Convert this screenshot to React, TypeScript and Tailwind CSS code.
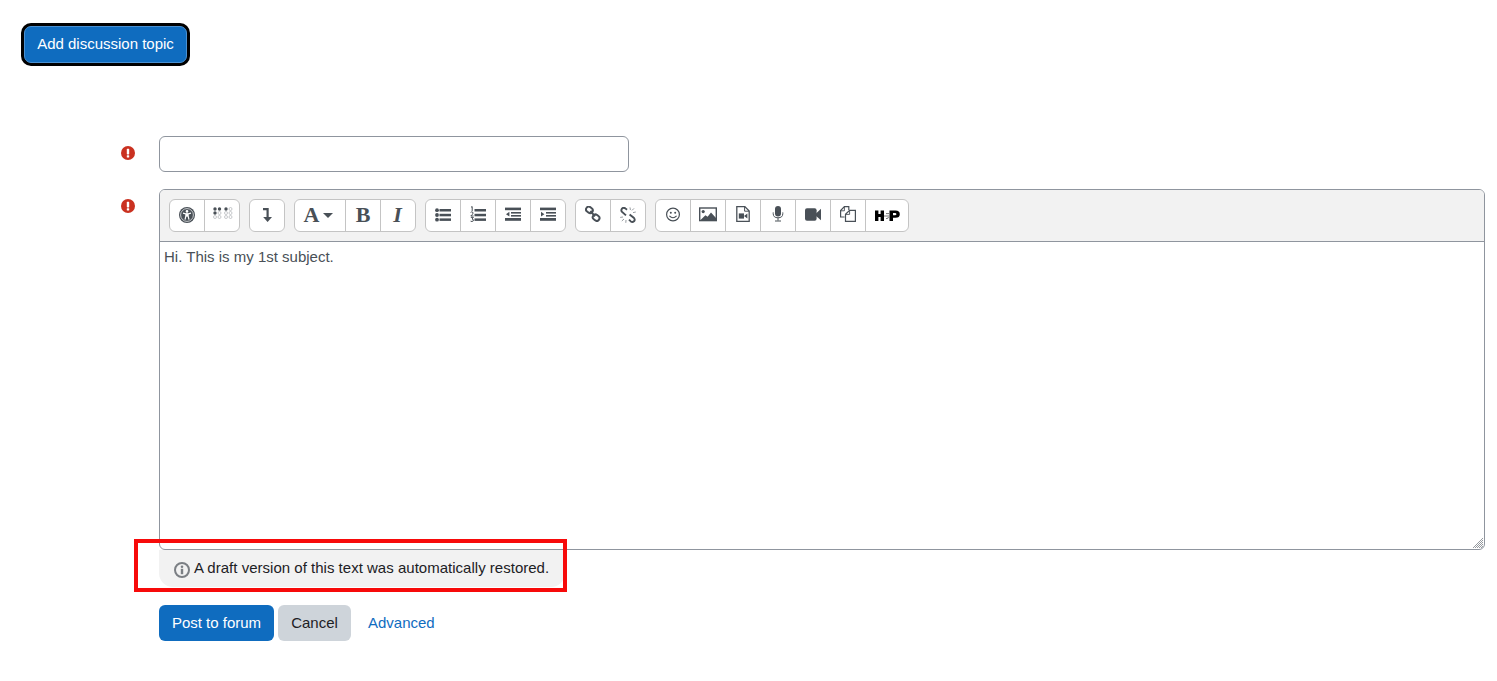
const ink = '#495057';

function ToolIcon({ children, w = 16, h = 16, className }: { children: React.ReactNode; w?: number; h?: number; className?: string }) {
  return (
    <svg width={w} height={h} viewBox={`0 0 ${w} ${h}`} fill="none" aria-hidden="true" className={className}>
      {children}
    </svg>
  );
}

function ToolButton({ children, width, last }: { children: React.ReactNode; width?: string; last?: boolean }) {
  const w = width ?? (last ? 'w-[34px]' : 'w-[35px]');
  return (
    <div className={`${w} h-full flex items-start justify-center pt-[7px] ${last ? '' : 'border-r border-[#c4c4c4]'}`}>
      {children}
    </div>
  );
}

function ToolGroup({ children }: { children: React.ReactNode }) {
  return (
    <div className="flex h-[33px] bg-white border border-[#c4c4c4] rounded-[6px] overflow-hidden box-border">
      {children}
    </div>
  );
}

function RequiredIcon() {
  return (
    <svg width="14" height="14" viewBox="0 0 14 14" aria-hidden="true" className="block">
      <circle cx="7" cy="7" r="7" fill="#ca3120" />
      <rect x="5.8" y="2.8" width="2.4" height="5.6" rx="0.6" fill="#fff" />
      <rect x="5.8" y="9.3" width="2.4" height="2.1" rx="0.5" fill="#fff" />
    </svg>
  );
}

function BrailleDots({ x, y, on }: { x: number; y: number; on: boolean[] }) {
  const spots = [
    [0, 0], [4.5, 0], [0, 4], [4.5, 4], [0, 8], [4.5, 8],
  ];
  return (
    <g>
      {spots.map(([dx, dy], i) => (
        <circle
          key={i}
          cx={x + dx}
          cy={y + dy}
          r={on[i] ? 1.7 : 1.5}
          fill={on[i] ? ink : 'none'}
          stroke={on[i] ? 'none' : '#a4a8ac'}
          strokeWidth="0.6"
        />
      ))}
    </g>
  );
}

function ListBars() {
  return (
    <>
      <rect x="4.5" y="2" width="11.5" height="2.5" fill={ink} />
      <rect x="4.5" y="6.8" width="11.5" height="2.5" fill={ink} />
      <rect x="4.5" y="11.4" width="11.5" height="2.5" fill={ink} />
    </>
  );
}

function IndentLines() {
  return (
    <>
      <rect x="0" y="0.6" width="16" height="2.6" fill={ink} />
      <rect x="6" y="5" width="10" height="1.6" fill={ink} />
      <rect x="6" y="8" width="10" height="1.6" fill={ink} />
      <rect x="0" y="11" width="16" height="2.8" fill={ink} />
    </>
  );
}

function Toolbar() {
  return (
    <div className="h-[52px] bg-[#f2f2f2] border-b border-[#8f959e] pt-[9px] pl-[9px] flex gap-[9px] box-border">
      <ToolGroup>
        <ToolButton>
          <ToolIcon>
            <circle cx="8" cy="8" r="8" fill={ink} />
            <circle cx="8" cy="8" r="6.4" stroke="#fff" strokeWidth="0.7" />
            <circle cx="8" cy="4.4" r="1.3" fill="#fff" />
            <path d="M4 6.2 L6.8 6.8 H9.2 L12 6.2 M6.9 6.8 V9 L6 12.6 M9.1 6.8 V9 L10 12.6" stroke="#fff" strokeWidth="1.2" />
            <rect x="6.9" y="6.6" width="2.2" height="3" fill="#fff" />
          </ToolIcon>
        </ToolButton>
        <ToolButton last>
          <ToolIcon w={22} h={16}>
            <BrailleDots x={4} y={2} on={[true, true, true, false, false, false]} />
            <BrailleDots x={15} y={2} on={[true, false, false, false, false, false]} />
          </ToolIcon>
        </ToolButton>
      </ToolGroup>

      <ToolGroup>
        <ToolButton last>
          <ToolIcon>
            <path d="M4 2.2 H8.6 V11" stroke={ink} strokeWidth="2.2" />
            <path d="M4.2 10 H13 L8.6 15 Z" fill={ink} />
          </ToolIcon>
        </ToolButton>
      </ToolGroup>

      <ToolGroup>
        <ToolButton width="w-[51px]">
          <div className="flex items-start mr-[3px]">
            <span className="font-['Liberation_Serif',serif] font-bold text-[22px] leading-[16px] text-[#495057] mr-[4px]">A</span>
            <svg width="10" height="5" viewBox="0 0 10 5" className="mt-[6px]" aria-hidden="true">
              <path d="M0 0 H10 L5 5 Z" fill={ink} />
            </svg>
          </div>
        </ToolButton>
        <ToolButton>
          <span className="font-['Liberation_Serif',serif] font-bold text-[22px] leading-[16px] text-[#495057]">B</span>
        </ToolButton>
        <ToolButton last>
          <span className="font-['Liberation_Serif',serif] font-bold italic text-[22px] leading-[16px] text-[#495057] -ml-[1px]">I</span>
        </ToolButton>
      </ToolGroup>

      <ToolGroup>
        <ToolButton>
          <ToolIcon>
            <circle cx="2" cy="3.2" r="1.9" fill={ink} />
            <circle cx="2" cy="8" r="1.9" fill={ink} />
            <circle cx="2" cy="12.7" r="1.9" fill={ink} />
            <ListBars />
          </ToolIcon>
        </ToolButton>
        <ToolButton>
          <ToolIcon className="-mt-[1px]">
            <path d="M1 1.2 L2.2 0.6 V5 M0.6 6.4 Q1.4 5.6 2.6 6 Q3.6 7 2.4 8.4 L0.8 10 H3.6 M0.8 11.4 H3.4 L2 13 Q3.8 13.2 3.4 14.8 Q2 16 0.6 15.2" stroke={ink} strokeWidth="1" />
            <g transform="translate(0 1)">
              <ListBars />
            </g>
          </ToolIcon>
        </ToolButton>
        <ToolButton>
          <ToolIcon>
            <IndentLines />
            <path d="M4.4 4.8 V9.6 L1 7.2 Z" fill={ink} />
          </ToolIcon>
        </ToolButton>
        <ToolButton last>
          <ToolIcon>
            <IndentLines />
            <path d="M1 4.8 V9.6 L4.4 7.2 Z" fill={ink} />
          </ToolIcon>
        </ToolButton>
      </ToolGroup>

      <ToolGroup>
        <ToolButton>
          <ToolIcon className="-mt-[1px]">
            <g stroke={ink} strokeWidth="2">
              <rect x="0.9" y="1.2" width="7" height="5.4" rx="2.7" transform="rotate(38 4.4 3.9)" />
              <rect x="7.6" y="9" width="7" height="5.4" rx="2.7" transform="rotate(38 11.1 11.7)" />
              <path d="M5.4 5 L10 10.4" />
            </g>
          </ToolIcon>
        </ToolButton>
        <ToolButton last>
          <ToolIcon>
            <g stroke={ink} strokeWidth="1.9">
              <path d="M7 2.8 L5.4 1.4 Q3.4 0.2 2 1.6 Q0.8 3.2 1.8 4.7 L6 8.4" />
              <path d="M9.6 7.4 L14 11 Q15.4 12.8 14 14.3 Q12.4 15.6 10.8 14.4 L9 12.6" />
            </g>
            <g stroke="#8a8f94" strokeWidth="0.9">
              <path d="M10 0.4 L10.4 3 M14 1.4 L12 3.4 M15.8 5 L13 5.6 M0.2 10.4 L3 10 M1.8 14 L4 12 M5.8 15.8 L6 13" />
            </g>
          </ToolIcon>
        </ToolButton>
      </ToolGroup>

      <ToolGroup>
        <ToolButton>
          <ToolIcon>
            <circle cx="8" cy="7.5" r="6.4" stroke={ink} strokeWidth="1.2" />
            <circle cx="5.8" cy="5.8" r="1" fill={ink} />
            <circle cx="10.2" cy="5.8" r="1" fill={ink} />
            <path d="M4.4 8.8 Q8 12.6 11.6 8.8" stroke={ink} strokeWidth="1.1" />
          </ToolIcon>
        </ToolButton>
        <ToolButton>
          <ToolIcon w={18}>
            <rect x="0.7" y="1" width="16.6" height="12.6" stroke={ink} strokeWidth="1.4" />
            <circle cx="4.2" cy="4.6" r="1.6" fill={ink} />
            <path d="M1 13.4 L6.4 8.2 L8.6 9.8 L12 5.6 L17 11 V13.4 Z" fill={ink} />
          </ToolIcon>
        </ToolButton>
        <ToolButton>
          <ToolIcon w={14} className="-mt-[1px]">
            <path d="M0.8 0.6 H8.8 L13.2 5 V15.4 H0.8 Z" stroke={ink} strokeWidth="1.3" />
            <path d="M8.6 0.8 V5.2 H13" stroke={ink} strokeWidth="1" />
            <rect x="2.8" y="7.4" width="5.2" height="5.2" fill={ink} />
            <path d="M8 10 L11.4 7.4 V12.6 Z" fill={ink} />
          </ToolIcon>
        </ToolButton>
        <ToolButton>
          <ToolIcon w={12} className="-mt-[1px]">
            <rect x="3" y="0" width="6" height="10.6" rx="3" fill={ink} />
            <path d="M1.2 6.4 V7.6 Q1.2 11.8 6 11.8 Q10.8 11.8 10.8 7.6 V6.4" stroke={ink} strokeWidth="1" />
            <path d="M6 11.8 V14.6 M3 15 H9" stroke={ink} strokeWidth="1" />
          </ToolIcon>
        </ToolButton>
        <ToolButton>
          <ToolIcon>
            <rect x="0" y="1.2" width="11.6" height="12.6" rx="2" fill={ink} />
            <path d="M11 6.4 L16 1.8 V13.2 L11 9 Z" fill={ink} />
          </ToolIcon>
        </ToolButton>
        <ToolButton>
          <ToolIcon className="-mt-[1px]">
            <path d="M4.6 11 H0.6 V4.6 L4.4 0.7 H8.8 V4" stroke={ink} strokeWidth="1.2" />
            <path d="M4.4 0.8 V4.8 H0.8" stroke={ink} strokeWidth="0.9" />
            <path d="M5.5 15.4 V8.2 L9.6 4.3 H15.4 V15.4 Z" stroke={ink} strokeWidth="1.2" />
            <path d="M9.6 4.4 V8.4 H5.6" stroke={ink} strokeWidth="0.9" />
          </ToolIcon>
        </ToolButton>
        <ToolButton width="w-[42px]" last>
          <svg width="25" height="12" viewBox="0 0 25 12" className="mt-[3px]" aria-hidden="true">
            <path d="M0 0.5 H3.4 V4 H5.6 V0.5 H9 V11 H5.6 V7 H3.4 V11 H0 Z" fill="#000" />
            <path fillRule="evenodd" d="M14.5 0.5 H20.5 Q24.8 0.5 24.8 4.2 Q24.8 7.8 20.5 7.8 H18 V11 H14.5 Z M18 3 V5.3 H20 Q21.4 5.3 21.4 4.2 Q21.4 3 20 3 Z" fill="#000" />
            <path d="M9 6 H14.4 M11 3.6 H14 M11 8.6 Q13.6 8.8 13.4 7" stroke="#777" strokeWidth="1" fill="none" />
          </svg>
        </ToolButton>
      </ToolGroup>
    </div>
  );
}

export default function App() {
  return (
    <div className="min-h-[681px] bg-white font-['Liberation_Sans',Arial,sans-serif] text-[15px] overflow-hidden">
      {/* add topic button */}
      <div className="pl-[24px] pt-[26px]">
        <button className="block w-[163px] h-[37px] pb-[2px] rounded-[7px] bg-[#0f6cbf] border border-[#4a90d0] text-white text-[15px] leading-[22px] shadow-[0_0_0_3px_#000] outline-none">
          Add discussion topic
        </button>
      </div>

      {/* form */}
      <div className="pl-[121px] pr-[12px] pt-[73px]">
        <div className="flex items-start">
          <div className="w-[38px] pt-[10px]">
            <RequiredIcon />
          </div>
          <input
            type="text"
            className="block w-[470px] h-[36px] rounded-[6px] border border-[#8f959e] bg-white outline-none"
          />
        </div>

        <div className="flex items-start mt-[17px]">
          <div className="w-[38px] pt-[10px] shrink-0">
            <RequiredIcon />
          </div>
          <div className="flex-1 min-w-0">
            <div className="relative h-[361px] border border-[#8f959e] rounded-[6px] overflow-hidden box-border">
              <Toolbar />
              <div className="pl-[4px] pt-[4px] text-[15px] leading-[22px] text-[#495057]">
                Hi. This is my 1st subject.
              </div>
              <svg width="12" height="12" viewBox="0 0 12 12" className="absolute right-0 bottom-0" aria-hidden="true">
                <path d="M1 11 L11 1 M3 11 L11 3 M5 11 L11 5 M7 11 L11 7 M9 11 L11 9" stroke="#8a8f94" strokeWidth="0.9" />
              </svg>
            </div>

            {/* draft restored notice, red box is an annotation on top */}
            <div className="relative w-[406px] h-[37px] bg-[#f2f2f2] rounded-b-[14px] flex items-center pl-[15px] text-[#1d2125]">
              <svg width="16" height="16" viewBox="0 0 16 16" className="mr-[4px] mt-[2px] shrink-0" aria-hidden="true">
                <circle cx="8" cy="8" r="7" fill="none" stroke="#7b7f84" strokeWidth="2" />
                <circle cx="8" cy="4.8" r="1.3" fill="#7b7f84" />
                <rect x="6.8" y="6.8" width="2.4" height="5.4" fill="#7b7f84" />
              </svg>
              <span className="whitespace-nowrap tracking-[0.015px]">A draft version of this text was automatically restored.</span>
              <div className="absolute left-[-25px] top-[-11px] w-[433px] h-[53px] border-4 border-[#f70a0a] box-border" />
            </div>

            <div className="flex items-center mt-[18px]">
              <button className="h-[36px] w-[115px] rounded-[6px] bg-[#0f6cbf] text-white text-[15px]">Post to forum</button>
              <button className="h-[36px] w-[73px] ml-[4px] rounded-[6px] bg-[#ced4da] text-[#1d2125] text-[15px]">Cancel</button>
              <a className="ml-[17px] text-[#0f6cbf] text-[15px]">Advanced</a>
            </div>
          </div>
        </div>
      </div>
    </div>
  );
}
